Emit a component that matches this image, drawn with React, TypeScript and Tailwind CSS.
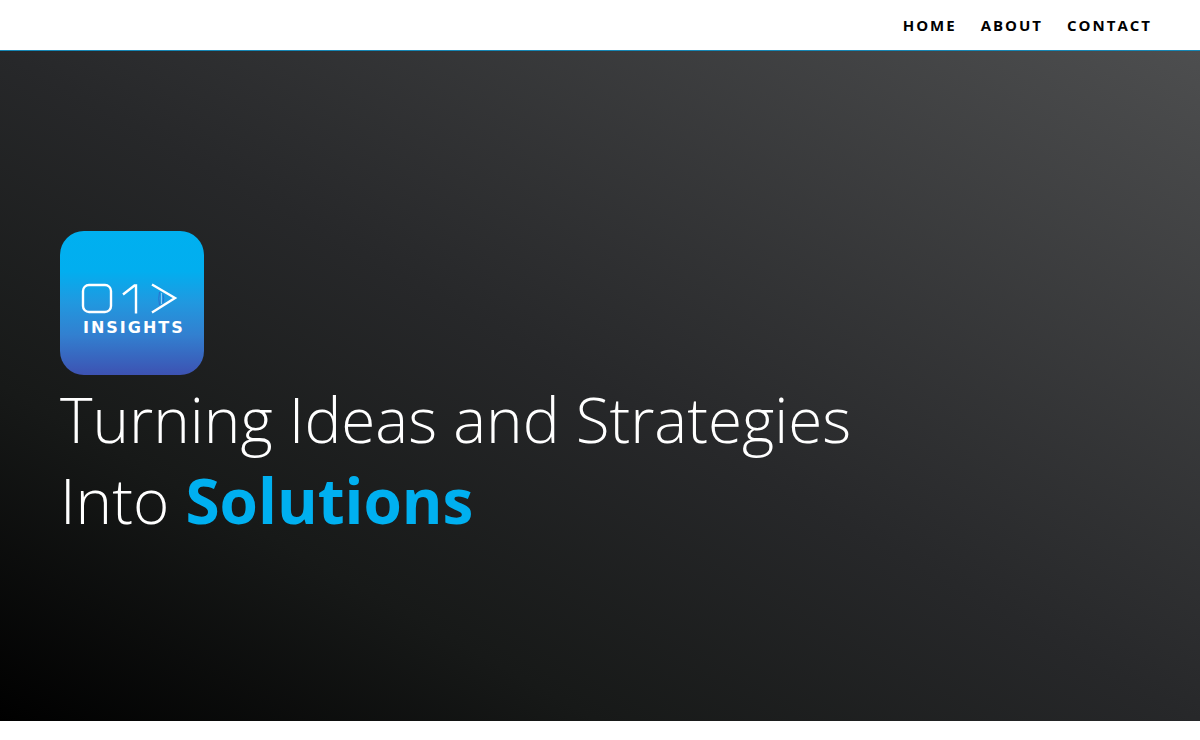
const links = [
  { label: "Home", href: "#home" },
  { label: "About", href: "#about" },
  { label: "Contact", href: "#contact" },
];

function Logo() {
  return (
    <svg className="size-36" viewBox="0 0 144 144" role="img" aria-label="01 Insights">
      <defs>
        <linearGradient id="tile" x1="0" y1="0" x2="0" y2="1">
          <stop offset="0" stopColor="#00b0f0" />
          <stop offset="0.28" stopColor="#02aeef" />
          <stop offset="0.5" stopColor="#2198df" />
          <stop offset="0.72" stopColor="#3280d0" />
          <stop offset="1" stopColor="#3d52b2" />
        </linearGradient>
      </defs>
      <rect width="144" height="144" rx="24" fill="url(#tile)" />
      <g fill="none" stroke="#fff" strokeWidth="2.4">
        <rect x="23" y="54" width="28" height="27" rx="6" />
        <path d="M63 63.5 L74.5 54.5 H76 V82.5" />
        <path d="M92 53.5 L115 67 L92 81.5" />
      </g>
      <g fill="none" stroke="#2a6fd0" strokeWidth="1">
        <path d="M99.5 61 Q98 67.5 99.5 74" />
        <path d="M103 63.5 Q104.5 67.5 103 71.5" />
      </g>
      <path d="M101.5 62 V73" fill="none" stroke="#8cc8f2" strokeWidth="1" />
      <text
        x="23"
        y="102"
        fill="#fff"
        className="font-['DejaVu_Sans',sans-serif] text-[16px] font-bold tracking-[2px]"
      >
        INSIGHTS
      </text>
    </svg>
  );
}

export default function App() {
  return (
    <div className="min-h-screen bg-white font-['Open_Sans','Noto_Sans',sans-serif]">
      <header className="flex h-[51px] items-center justify-end border-b border-[#1686b4] px-12">
        <nav aria-label="Main" className="flex gap-6">
          {links.map((link) => (
            <a
              key={link.label}
              href={link.href}
              className="text-[15px] leading-5 font-bold tracking-[2px] text-black uppercase"
            >
              {link.label}
            </a>
          ))}
        </nav>
      </header>
      <main className="flex min-h-[670px] flex-col justify-center bg-[linear-gradient(to_top_right,#000_0%,#171918_25%,#27282a_50%,#4d4e4f_100%)] px-[60px]">
        <Logo />
        <h1 className="mt-1 text-[62px] leading-[81px] font-light text-white">
          Turning Ideas and Strategies
          <br />
          Into <strong className="font-bold text-[#00b0f0]">Solutions</strong>
        </h1>
      </main>
    </div>
  );
}
